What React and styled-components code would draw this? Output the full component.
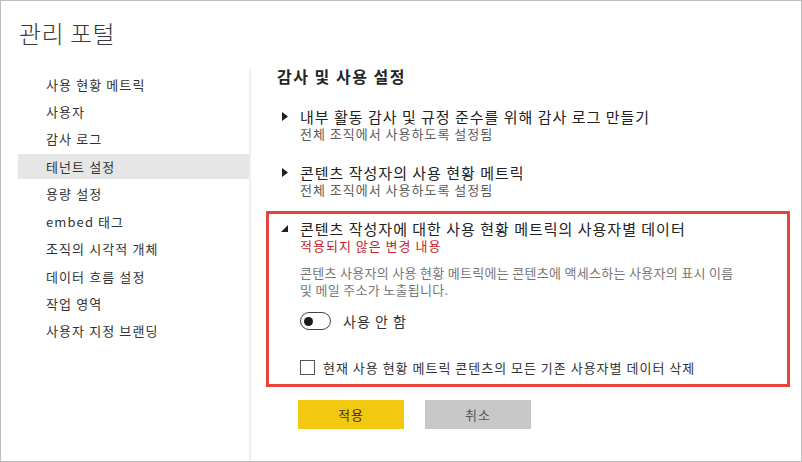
import React from "react"
import styled, { createGlobalStyle } from "styled-components"

const GlobalStyle = createGlobalStyle`
  body {
    margin: 0;
    font-family: "Noto Sans CJK KR", "Liberation Sans", sans-serif;
    background: #ffffff;
  }
`

const menuItems = [
  "사용 현황 메트릭",
  "사용자",
  "감사 로그",
  "테넌트 설정",
  "용량 설정",
  "embed 태그",
  "조직의 시각적 개체",
  "데이터 흐름 설정",
  "작업 영역",
  "사용자 지정 브랜딩",
]

const settings = [
  {
    title: "내부 활동 감사 및 규정 준수를 위해 감사 로그 만들기",
    status: "전체 조직에서 사용하도록 설정됨",
  },
  {
    title: "콘텐츠 작성자의 사용 현황 메트릭",
    status: "전체 조직에서 사용하도록 설정됨",
  },
]

const CollapsedArrow = () => (
  <svg width="6" height="9" viewBox="0 0 6 9">
    <path d="M0 0 L6 4.5 L0 9 Z" fill="#1f1f1f" />
  </svg>
)

const ExpandedArrow = () => (
  <svg width="7" height="7" viewBox="0 0 7 7">
    <path d="M7 0 L7 7 L0 7 Z" fill="#1f1f1f" />
  </svg>
)

const App = () => {
  return (
    <>
      <GlobalStyle />
      <Frame>
        <Header>관리 포털</Header>
        <Main>
          <Sidebar>
            {menuItems.map((item) => (
              <MenuItem key={item} $active={item === "테넌트 설정"}>
                {item}
              </MenuItem>
            ))}
          </Sidebar>
          <Divider />
          <Content>
            <Heading>감사 및 사용 설정</Heading>
            {settings.map((s) => (
              <Setting key={s.title}>
                <ArrowCell>
                  <CollapsedArrow />
                </ArrowCell>
                <div>
                  <SettingTitle>{s.title}</SettingTitle>
                  <SettingStatus>{s.status}</SettingStatus>
                </div>
              </Setting>
            ))}
            <HighlightBox>
              <Setting $flush>
                <ArrowCell $expanded>
                  <ExpandedArrow />
                </ArrowCell>
                <div>
                  <SettingTitle>콘텐츠 작성자에 대한 사용 현황 메트릭의 사용자별 데이터</SettingTitle>
                  <Pending>적용되지 않은 변경 내용</Pending>
                  <Description>
                    콘텐츠 사용자의 사용 현황 메트릭에는 콘텐츠에 액세스하는 사용자의 표시 이름 및 메일 주소가 노출됩니다.
                  </Description>
                  <ToggleRow>
                    <Toggle>
                      <Knob />
                    </Toggle>
                    <ToggleLabel>사용 안 함</ToggleLabel>
                  </ToggleRow>
                  <CheckRow>
                    <CheckBox />
                    <CheckLabel>현재 사용 현황 메트릭 콘텐츠의 모든 기존 사용자별 데이터 삭제</CheckLabel>
                  </CheckRow>
                </div>
              </Setting>
            </HighlightBox>
            <Buttons>
              <Button $primary>적용</Button>
              <Button>취소</Button>
            </Buttons>
          </Content>
        </Main>
      </Frame>
    </>
  )
}

export default App

const Frame = styled.div`
  width: 802px;
  height: 462px;
  box-sizing: border-box;
  border: 1px solid #bdbdbd;
  display: flex;
  flex-direction: column;
  overflow: hidden;
`

const Header = styled.div`
  height: 65px;
  padding: 15px 0 0 18px;
  box-sizing: border-box;
  font-size: 24px;
  line-height: 34px;
  font-weight: 300;
  letter-spacing: 0.5px;
  color: #3a3a3a;
`

const Main = styled.div`
  flex: 1;
  display: flex;
`

const Sidebar = styled.nav`
  width: 231px;
  margin-left: 17px;
  padding-top: 5.5px;
  display: flex;
  flex-direction: column;
  gap: 2.44px;
`

const MenuItem = styled.div`
  height: 25px;
  line-height: 25px;
  padding-left: 28px;
  font-size: 13px;
  letter-spacing: 1.1px;
  color: #333;
  background: ${(p) => (p.$active ? "#e6e6e6" : "transparent")};
`

const Divider = styled.div`
  width: 2px;
  margin-top: 3px;
  background: #efefef;
`

const Content = styled.section`
  flex: 1;
  padding: 0 11px 0 15px;
  display: flex;
  flex-direction: column;
  align-items: flex-start;
`

const Heading = styled.h2`
  margin: 0 0 0 11px;
  font-size: 16px;
  line-height: 20px;
  font-weight: 700;
  letter-spacing: 1.5px;
  color: #252525;
`

const Setting = styled.div`
  display: flex;
  margin-top: ${(p) => (p.$flush ? "0" : "21px")};
  padding-left: ${(p) => (p.$flush ? "0" : "16px")};
`

const ArrowCell = styled.div`
  width: ${(p) => (p.$expanded ? "19px" : "18px")};
  flex: none;
  display: flex;
  align-items: flex-start;
  padding-top: ${(p) => (p.$expanded ? "6px" : "5px")};
  box-sizing: border-box;
`

const SettingTitle = styled.div`
  font-size: 15px;
  line-height: 19px;
  letter-spacing: 1px;
  color: #222;
`

const SettingStatus = styled.div`
  font-size: 13px;
  line-height: 16px;
  letter-spacing: 1px;
  color: #5c5c5c;
`

const HighlightBox = styled.div`
  align-self: stretch;
  margin-top: 13px;
  border: 3px solid #e8443e;
  padding: 4.5px 12px 8.5px 12px;
`

const Pending = styled.div`
  font-size: 13px;
  line-height: 16px;
  letter-spacing: 1px;
  color: #c4262e;
`

const Description = styled.p`
  margin: 10.5px 0 0;
  max-width: 442px;
  font-size: 13px;
  line-height: 17px;
  letter-spacing: 0.3px;
  word-break: keep-all;
  color: #777;
`

const ToggleRow = styled.div`
  display: flex;
  align-items: center;
  margin-top: 14px;
  height: 18px;
`

const Toggle = styled.div`
  width: 31px;
  height: 18px;
  box-sizing: border-box;
  border: 1px solid #444;
  border-radius: 9px;
  display: flex;
  align-items: center;
  padding-left: 3px;
`

const Knob = styled.div`
  width: 9px;
  height: 9px;
  border-radius: 50%;
  background: #1a1a1a;
`

const ToggleLabel = styled.span`
  margin-left: 12px;
  font-size: 14px;
  letter-spacing: 1px;
  color: #333;
`

const CheckRow = styled.div`
  display: flex;
  align-items: center;
  margin-top: 29px;
  height: 16px;
`

const CheckBox = styled.div`
  width: 13px;
  height: 13px;
  border: 1px solid #555;
  background: #fff;
`

const CheckLabel = styled.span`
  margin-left: 8px;
  font-size: 13px;
  letter-spacing: 1px;
  color: #333;
`

const Buttons = styled.div`
  display: flex;
  gap: 21px;
  margin: 13px 0 0 32px;
`

const Button = styled.button`
  width: 106px;
  height: 29px;
  border: none;
  padding: 0;
  font-family: inherit;
  font-size: 13px;
  letter-spacing: 1px;
  color: ${(p) => (p.$primary ? "#333" : "#555")};
  background: ${(p) => (p.$primary ? "#f2c811" : "#c8c8c8")};
`
